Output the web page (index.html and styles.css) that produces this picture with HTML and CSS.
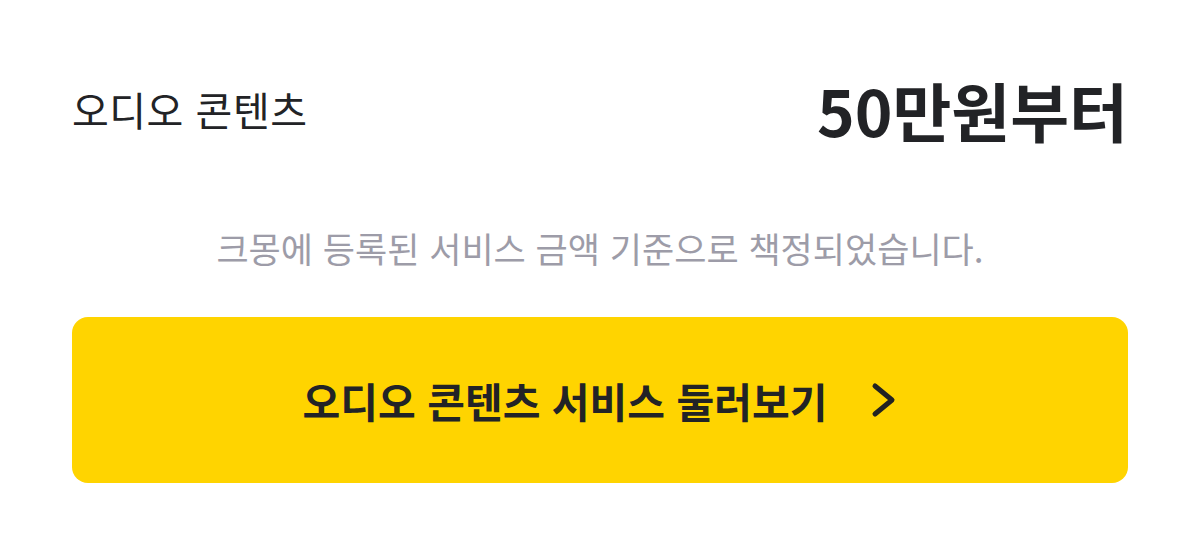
FILE: index.html
```html
<!DOCTYPE html>
<html lang="ko">
<head>
  <meta charset="UTF-8" />
  <meta name="viewport" content="width=device-width, initial-scale=1.0"/>
  <title>오디오 콘텐츠</title>
  <link rel="stylesheet" href="styles.css">
</head>
<body>

  <div class="wrap">
    <div class="price-row">
      <span class="category">오디오 콘텐츠</span>
      <span class="price">50만원부터</span>
    </div>

    <p class="note">크몽에 등록된 서비스 금액 기준으로 책정되었습니다.</p>

    <a class="browse-btn" href="#">
      <span>오디오 콘텐츠 서비스 둘러보기</span>
      <svg class="chevron" width="26" height="36" viewBox="0 0 26 36">
        <polyline points="4,4 21,18 4,32" fill="none" stroke="#222" stroke-width="5" stroke-linecap="round" stroke-linejoin="round"/>
      </svg>
    </a>
  </div>

</body>
</html>
```

FILE: styles.css
```css
body {
  margin: 0;
  background-color: #ffffff;
  font-family: "Noto Sans CJK KR", "Noto Sans", sans-serif;
  color: #222326;
}

.wrap {
  padding: 69px 72px 0;
}

.price-row {
  display: flex;
  justify-content: space-between;
  align-items: center;
  height: 80px;
}

.category {
  font-size: 40px;
  line-height: 48px;
  font-weight: 400;
  letter-spacing: 0.5px;
}

.price {
  font-size: 64px;
  line-height: 80px;
  font-weight: 700;
}

.note {
  margin: 75px 0 0;
  text-align: center;
  font-size: 35px;
  line-height: 48px;
  color: #9d9ca8;
}

.browse-btn {
  margin-top: 45px;
  height: 166px;
  border-radius: 16px;
  background-color: #ffd400;
  display: flex;
  justify-content: center;
  align-items: center;
  gap: 44px;
  text-decoration: none;
  color: #222326;
  font-size: 41px;
  font-weight: 700;
}

.chevron {
  display: block;
}
```
